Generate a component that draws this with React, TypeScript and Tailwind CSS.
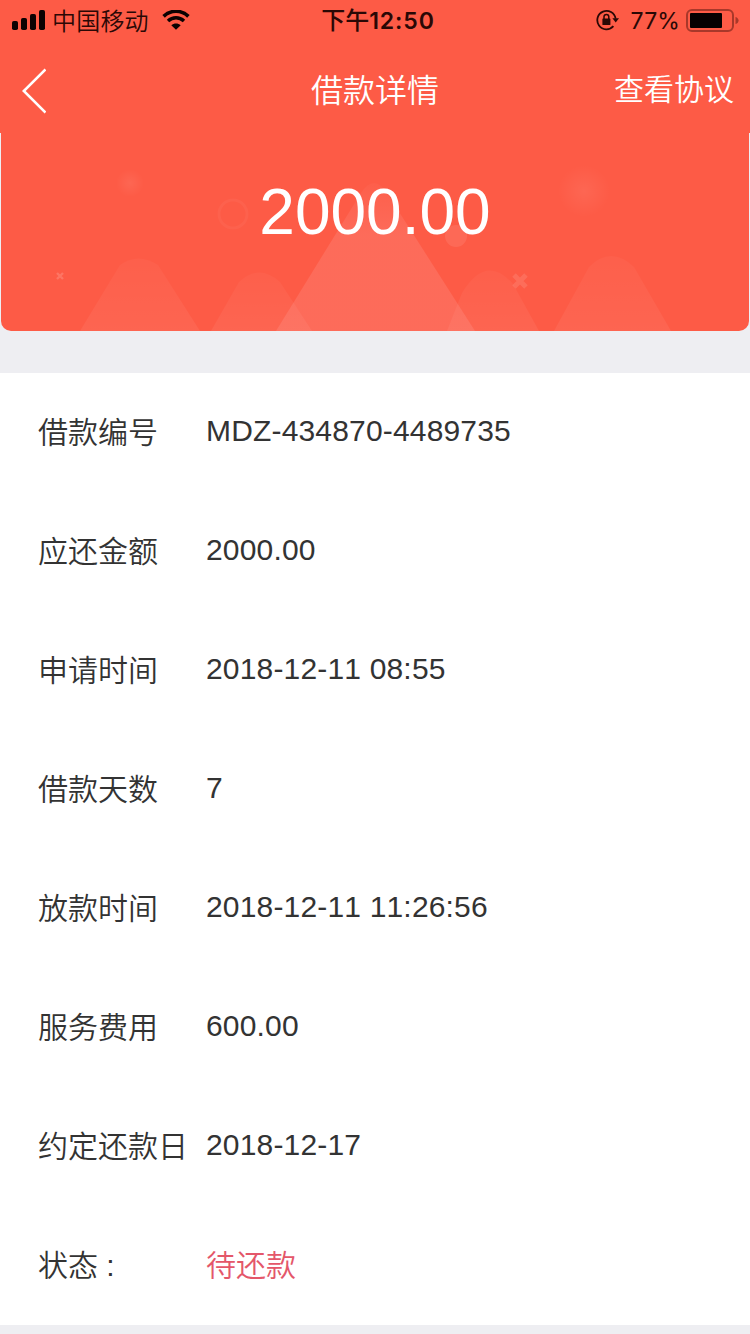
import React from 'react';

interface DetailItem {
  label: string;
  value: string;
  highlight?: boolean;
}

const details: DetailItem[] = [
  { label: '借款编号', value: 'MDZ-434870-4489735' },
  { label: '应还金额', value: '2000.00' },
  { label: '申请时间', value: '2018-12-11 08:55' },
  { label: '借款天数', value: '7' },
  { label: '放款时间', value: '2018-12-11 11:26:56' },
  { label: '服务费用', value: '600.00' },
  { label: '约定还款日', value: '2018-12-17' },
  { label: '状态 :', value: '待还款', highlight: true },
];

function StatusBar() {
  return (
    <div className="grid grid-cols-3 items-center h-10 pl-3 pr-[11px] text-[#2a0805] font-[Inter,'Noto_Sans_CJK_SC',sans-serif]">
      <div className="flex items-center">
        <svg className="w-[34px] h-5 shrink-0" viewBox="0 0 34 20" fill="#0c0202">
          <rect x="0" y="11" width="6" height="9" rx="1.8" />
          <rect x="9" y="8" width="6" height="12" rx="1.8" />
          <rect x="18" y="4" width="6" height="16" rx="1.8" />
          <rect x="27" y="0" width="6" height="20" rx="1.8" />
        </svg>
        <span className="ml-1.5 pt-[3px] text-[24px] leading-[37px] font-[350] tracking-[0.2px] whitespace-nowrap">中国移动</span>
        <svg className="ml-[13px] w-7 h-5 shrink-0" viewBox="0 0 28 20" fill="none" stroke="#0c0202">
          <path d="M1.6 6.4C8.7 -0.4 19.3 -0.4 26.4 6.4" strokeWidth="3.6" />
          <path d="M6 11C10.7 6.7 17.3 6.7 22 11" strokeWidth="3.5" />
          <path d="M14 19.8L9.3 15.2C12 12.9 16 12.9 18.7 15.2Z" fill="#0c0202" stroke="none" />
        </svg>
      </div>
      <div className="flex justify-center pl-[5px] pt-0.5 text-[23px] font-semibold leading-[38px] whitespace-nowrap">
        <span className="text-[24px] font-medium">下午</span>
        <span className="tracking-[0.9px]">12:50</span>
      </div>
      <div className="flex items-center justify-end">
        <svg className="w-6 h-[22px] shrink-0" viewBox="0 0 24 22" fill="none" stroke="#2a0805">
          <path d="M20.6 9.6A9.2 9.2 0 1 0 18.4 17.2" strokeWidth="1.8" />
          <path d="M17.4 9.2H24L20.7 13.6Z" fill="#2a0805" stroke="none" />
          <rect x="7.4" y="9.4" width="8" height="6.6" rx="0.6" fill="#2a0805" stroke="none" />
          <path d="M9 10V7.8A2.4 2.4 0 0 1 13.8 7.8V10" strokeWidth="1.5" />
        </svg>
        <span className="ml-3 pt-0.5 text-[23px] leading-[38px] tracking-[0.1px]">77%</span>
        <svg className="ml-1.5 w-[53px] h-6 shrink-0" viewBox="0 0 53 24">
          <rect x="1" y="2" width="46" height="21" rx="5" fill="none" stroke="#a8382a" strokeWidth="2" />
          <rect x="4" y="5" width="32" height="15" rx="1" fill="#050101" />
          <path d="M49.5 9C53.6 10 53.6 15 49.5 16Z" fill="#a8382a" />
        </svg>
      </div>
    </div>
  );
}

function NavBar() {
  return (
    <div className="grid grid-cols-3 items-center h-[93px] pt-[7px] text-white">
      <button className="pl-[22px] pt-0.5 justify-self-start">
        <svg className="w-6 h-[46px]" viewBox="0 0 24 46" fill="none" stroke="#fff" strokeWidth="2.6">
          <path d="M23.5 1.5L1.8 23L23.5 44.5" />
        </svg>
      </button>
      <h1 className="pt-0.5 text-center text-[32px] leading-[46px] font-[350]">借款详情</h1>
      <button className="justify-self-end pr-4 text-[30px] leading-[46px] font-[350]">查看协议</button>
    </div>
  );
}

function HeroBackground() {
  return (
    <svg className="absolute inset-0 w-full h-full" viewBox="0 0 748 198" preserveAspectRatio="none">
      <defs>
        <radialGradient id="glow">
          <stop offset="0" stopColor="#fff" stopOpacity="0.07" />
          <stop offset="1" stopColor="#fff" stopOpacity="0" />
        </radialGradient>
        <linearGradient id="peak" x1="0" y1="0" x2="0" y2="1">
          <stop offset="0" stopColor="#fbb" stopOpacity="0.04" />
          <stop offset="0.35" stopColor="#fbb" stopOpacity="0.17" />
          <stop offset="1" stopColor="#fbb" stopOpacity="0.17" />
        </linearGradient>
        <linearGradient id="hill" x1="0" y1="0" x2="0" y2="1">
          <stop offset="0" stopColor="#fff" stopOpacity="0.03" />
          <stop offset="1" stopColor="#fff" stopOpacity="0.06" />
        </linearGradient>
      </defs>
      <g fill="url(#hill)">
        <path d="M79 198L119 132Q137 119 157 132L199 198Z" />
        <path d="M210 198L238 149Q258 130 279 149L311 198Z" />
        <path d="M446 198L461 160Q485 120 512 151L538 198Z" />
        <path d="M553 198L588 134Q610 112 633 134L670 198Z" />
      </g>
      <path d="M275 198L360 60Q373 40 386 60L474 198Z" fill="url(#peak)" />
      <circle cx="129" cy="50" r="14" fill="url(#glow)" />
      <circle cx="583" cy="58" r="26" fill="url(#glow)" />
      <circle cx="232" cy="81" r="14" fill="none" stroke="#fff" strokeOpacity="0.04" strokeWidth="3" />
      <circle cx="455" cy="103" r="11" fill="#fff" fillOpacity="0.09" />
      <path d="M513 142L525 154M525 142L513 154" stroke="#fff" strokeOpacity="0.11" strokeWidth="5" />
      <path d="M56 140L62 146M62 140L56 146" stroke="#fff" strokeOpacity="0.16" strokeWidth="2.4" />
    </svg>
  );
}

function DetailRow({ label, value, highlight }: DetailItem) {
  return (
    <div className="flex items-center h-[119px] pl-[38px] text-[30px] leading-[44px] text-[#333]">
      <dt className="w-[168px] pt-px font-[350] whitespace-nowrap">{label}</dt>
      <dd className={highlight ? 'pt-px text-[#e4576a] font-[350]' : 'pb-[3px] tracking-[0.17px] [font-kerning:none]'}>{value}</dd>
    </div>
  );
}

export default function App() {
  return (
    <div className="min-h-[1334px] w-full overflow-hidden bg-[#eeeef2] font-['Liberation_Sans','Noto_Sans_CJK_SC',sans-serif]">
      <header className="bg-[#fd5b46]">
        <StatusBar />
        <NavBar />
      </header>

      <section className="relative mx-px h-[198px] overflow-hidden rounded-b-[10px] bg-[#fd5b46]">
        <HeroBackground />
        <p className="relative pt-[39px] text-center text-[64px] leading-[80px] text-white">2000.00</p>
      </section>

      <dl className="mt-[42px] bg-white">
        {details.map((item) => (
          <DetailRow key={item.label} {...item} />
        ))}
      </dl>
    </div>
  );
}
